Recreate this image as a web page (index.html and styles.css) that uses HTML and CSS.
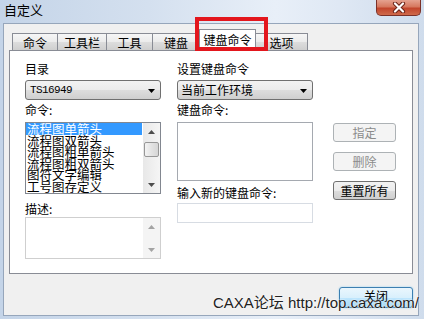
FILE: index.html
```html
<!DOCTYPE html>
<html lang="zh-CN">
<head>
<meta charset="utf-8">
<title>自定义</title>
<link rel="stylesheet" href="styles.css">
</head>
<body>
<div class="window">
  <div class="titlebar">
    <span class="title">自定义</span>
    <div class="close-x">
      <svg width="14" height="11" viewBox="0 0 14 11"><path d="M3 1.5 L11 9.5 M11 1.5 L3 9.5" stroke="#6b2418" stroke-width="4.2" stroke-linecap="round"/><path d="M3 1.5 L11 9.5 M11 1.5 L3 9.5" stroke="#ffffff" stroke-width="2.2" stroke-linecap="round"/></svg>
    </div>
  </div>
  <div class="client">
    <div class="tabs">
      <div class="tab t1">命令</div>
      <div class="tab t2">工具栏</div>
      <div class="tab t3">工具</div>
      <div class="tab t4">键盘</div>
      <div class="tab tab-active">键盘命令</div>
      <div class="tab t6">选项</div>
    </div>
    <div class="panel">
      <div class="col">
        <div class="label">目录</div>
        <div class="combo">
          <span class="mono">TS16949</span>
          <svg class="dd" width="8" height="4" viewBox="0 0 8 4"><polygon points="0,0 7,0 3.5,4" fill="#000"/></svg>
        </div>
        <div class="label gap3">命令:</div>
        <div class="listbox">
          <div class="items">
            <div class="item sel">流程图单箭头</div>
            <div class="item">流程图双箭头</div>
            <div class="item">流程图粗单箭头</div>
            <div class="item">流程图粗双箭头</div>
            <div class="item">图符文字编辑</div>
            <div class="item">工号图存定义</div>
          </div>
          <div class="vscroll">
            <div class="sbtn"><svg width="7" height="4" viewBox="0 0 7 4"><polygon points="0,4 7,4 3.5,0" fill="#4d4d4d"/></svg></div>
            <div class="track"><div class="thumb"></div></div>
            <div class="sbtn"><svg width="7" height="4" viewBox="0 0 7 4"><polygon points="0,0 7,0 3.5,4" fill="#4d4d4d"/></svg></div>
          </div>
        </div>
        <div class="label gap8">描述:</div>
        <div class="descbox">
          <div class="descarea"></div>
          <div class="vscroll vscroll-off">
            <div class="sbtn"><svg width="7" height="4" viewBox="0 0 7 4"><polygon points="0,4 7,4 3.5,0" fill="#a3a3a3"/></svg></div>
            <div class="track"></div>
            <div class="sbtn"><svg width="7" height="4" viewBox="0 0 7 4"><polygon points="0,0 7,0 3.5,4" fill="#a3a3a3"/></svg></div>
          </div>
        </div>
      </div>
      <div class="col col-right">
        <div class="label">设置键盘命令</div>
        <div class="combo">
          <span>当前工作环境</span>
          <svg class="dd" width="8" height="4" viewBox="0 0 8 4"><polygon points="0,0 7,0 3.5,4" fill="#000"/></svg>
        </div>
        <div class="label gap3">键盘命令:</div>
        <div class="keybox"></div>
        <div class="label gap5">输入新的键盘命令:</div>
        <div class="newkey"></div>
      </div>
      <div class="btncol">
        <div class="btn btn-off">指定</div>
        <div class="btn btn-off">删除</div>
        <div class="btn">重置所有</div>
      </div>
    </div>
    <div class="footer">
      <div class="btn btn-default">关闭</div>
    </div>
  </div>
  <div class="highlight"></div>
  <div class="watermark">CAXA论坛 http://top.caxa.com/</div>
</div>
</body>
</html>
```

FILE: styles.css
```css
* { box-sizing: border-box; }
html, body { margin: 0; padding: 0; }
body {
  width: 424px;
  height: 319px;
  overflow: hidden;
  font-family: "Noto Sans CJK SC", "Noto Sans", sans-serif;
  font-size: 12px;
  color: #000;
  background: #d6e2f0;
}
.window {
  position: relative;
  width: 424px;
  height: 319px;
  display: flex;
  flex-direction: column;
  background: linear-gradient(to right, #c4d4e8 0%, #d4e0ef 35%, #e8eff8 65%, #dfe8f4 80%, #cfdcec 100%);
}
.titlebar {
  height: 23px;
  display: flex;
  justify-content: space-between;
  align-items: flex-start;
  padding-left: 4px;
}
.title {
  font-size: 13px;
  line-height: 16px;
  margin-top: 2px;
  color: #000;
}
.close-x {
  width: 45px;
  height: 16px;
  margin-right: 3px;
  border: 1px solid #7b3128;
  border-top: none;
  border-radius: 0 0 5px 5px;
  background: linear-gradient(#e5a290 0%, #d6785f 45%, #c2452c 55%, #cf6a4b 100%);
  display: flex;
  align-items: center;
  justify-content: center;
}
.client {
  margin: 0 5px 0 3px;
  height: 293px;
  background: #f0f0f0;
  border: 1px solid #96a6bb;
  padding: 5px 5px 0 5px;
  display: flex;
  flex-direction: column;
}
.tabs {
  display: flex;
  align-items: flex-end;
  height: 22px;
  margin-bottom: -1px;
  padding-left: 3px;
}
.tab {
  height: 17px;
  margin-bottom: 1px;
  border: 1px solid #898c95;
  border-bottom: none;
  border-left: none;
  background: linear-gradient(#f6f6f6 0%, #ebebeb 50%, #dddddd 51%, #cfcfcf 100%);
  display: flex;
  align-items: center;
  justify-content: center;
  line-height: 14px;
  padding-top: 2px;
}
.t1 { width: 46px; border-left: 1px solid #898c95; }
.t2 { width: 49px; }
.t3 { width: 46px; }
.t4 { width: 47px; }
.t6 { width: 52px; }
.tab-active {
  position: relative;
  z-index: 1;
  width: 57px;
  height: 22px;
  margin-bottom: 0;
  margin-left: -1px;
  border-left: 1px solid #898c95;
  background: #ffffff;
  padding-top: 0;
  padding-bottom: 2px;
}
.panel {
  height: 224px;
  background: #ffffff;
  border: 1px solid #898c95;
  display: flex;
  align-items: flex-start;
  padding: 11px 0 0 15px;
}
.col {
  width: 136px;
  display: flex;
  flex-direction: column;
}
.col-right { margin-left: 16px; }
.label {
  height: 14px;
  line-height: 14px;
  white-space: nowrap;
}
.gap3 { margin-top: 3px; }
.gap5 { margin-top: 5px; }
.gap8 { margin-top: 8px; }
.combo {
  margin-top: 4px;
  height: 20px;
  border: 1px solid #707070;
  border-radius: 3px;
  background: linear-gradient(#f2f2f2 0%, #ebebeb 50%, #dddddd 51%, #cfcfcf 100%);
  display: flex;
  align-items: center;
  justify-content: space-between;
  padding: 0 4px 0 3px;
  line-height: 14px;
}
.mono {
  font-family: "Liberation Mono", "DejaVu Sans Mono", monospace;
  font-size: 11px;
  letter-spacing: -0.6px;
  padding-left: 1px;
}
.dd { margin-top: 1px; }
.listbox {
  margin-top: 5px;
  height: 72px;
  border: 1px solid #828790;
  display: flex;
  overflow: hidden;
}
.items {
  flex: 1;
  overflow: hidden;
  padding-right: 1px;
}
.item {
  height: 11.5px;
  line-height: 11.5px;
  font-size: 12.5px;
  padding-left: 1px;
  white-space: nowrap;
}
.item.sel {
  background: #3399ff;
  color: #ffffff;
  height: 12px;
  margin-bottom: -0.5px;
}
.vscroll {
  width: 17px;
  display: flex;
  flex-direction: column;
  background: linear-gradient(to right, #e8e8e8, #f5f5f5);
}
.sbtn {
  height: 17px;
  display: flex;
  align-items: center;
  justify-content: center;
}
.track {
  flex: 1;
  display: flex;
  flex-direction: column;
  align-items: center;
}
.thumb {
  margin-top: 2px;
  width: 15px;
  height: 15px;
  border: 1px solid #979797;
  border-radius: 2px;
  background: linear-gradient(to right, #f3f3f3, #e3e3e3 50%, #d6d6d6);
}
.descbox {
  margin-top: 1px;
  height: 42px;
  border: 1px solid #cfcfcf;
  display: flex;
}
.descarea { flex: 1; }
.vscroll-off { background: #f4f4f4; }
.keybox {
  margin-top: 5px;
  height: 59px;
  border: 1px solid #a5a9b0;
  background: #ffffff;
}
.newkey {
  margin-top: 3px;
  height: 20px;
  border: 1px solid #d7dce3;
  background: #ffffff;
}
.btncol {
  margin-left: 20px;
  width: 63px;
  padding-top: 61px;
  display: flex;
  flex-direction: column;
  gap: 10px;
}
.btn {
  height: 19px;
  border: 1px solid #707070;
  border-radius: 3px;
  background: linear-gradient(#f2f2f2 0%, #ebebeb 50%, #dddddd 51%, #cfcfcf 100%);
  display: flex;
  align-items: center;
  justify-content: center;
  line-height: 14px;
  white-space: nowrap;
}
.btn-off {
  border-color: #adb2b5;
  background: #f4f4f4;
  color: #8b8b8b;
}
.footer {
  display: flex;
  justify-content: flex-end;
  padding-top: 13px;
}
.btn-default {
  width: 74px;
  height: 21px;
  border: 1px solid #3c7fb1;
  background: linear-gradient(#eaf6fd 0%, #d9f0fc 50%, #bee6fd 51%, #a7d9f5 100%);
  box-shadow: 0 0 2px #8fcdf0;
  align-items: flex-start;
  padding-top: 1px;
}
.highlight {
  position: absolute;
  left: 195px;
  top: 17px;
  width: 73px;
  height: 34px;
  border: 4px solid #e3161d;
  z-index: 5;
}
.watermark {
  position: absolute;
  left: 213px;
  top: 294px;
  font-family: "Liberation Sans", "Noto Sans CJK SC", sans-serif;
  font-size: 15px;
  line-height: 18px;
  color: #222222;
  white-space: nowrap;
  text-shadow: 0 0 2px #ffffff, 0 0 1px #ffffff;
  z-index: 6;
}
```
